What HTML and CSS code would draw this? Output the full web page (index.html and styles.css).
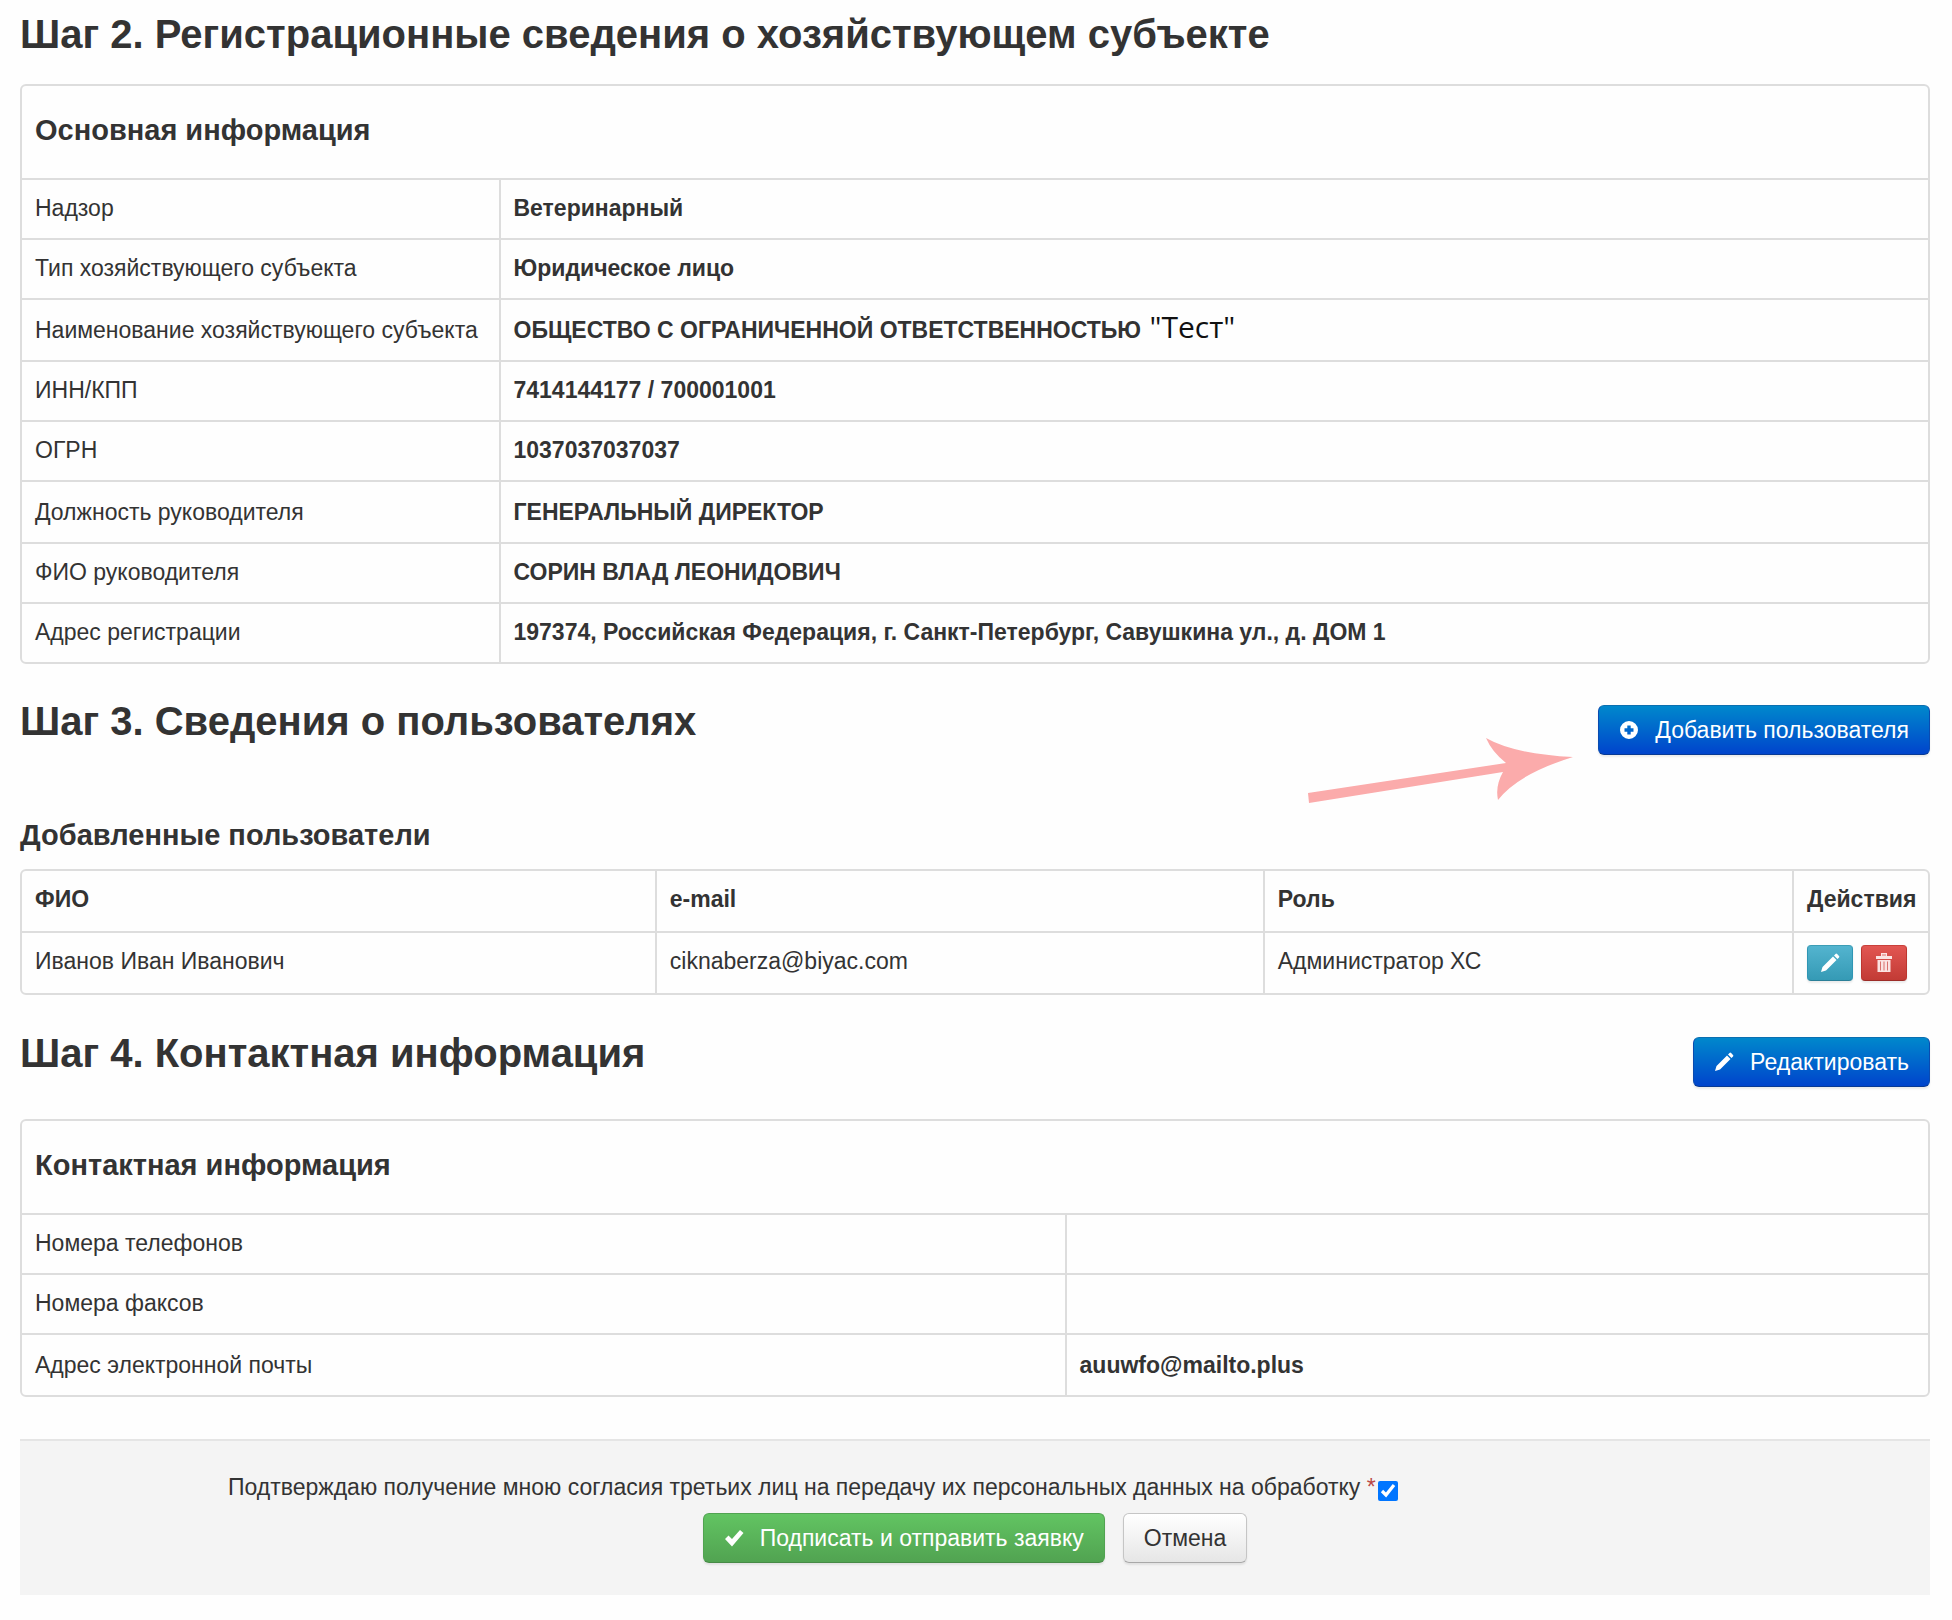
FILE: index.html
```html
<!DOCTYPE html>
<html lang="ru">
<head>
  <meta charset="UTF-8">
  <meta name="viewport" content="width=device-width, initial-scale=1">
  <title>Регистрация хозяйствующего субъекта</title>
  <link rel="stylesheet" href="styles.css">
</head>
<body>
  <div class="page">
    <div class="step-header">
      <h2>Шаг 2. Регистрационные сведения о хозяйствующем субъекте</h2>
    </div>

    <table class="table table-info">
      <thead>
        <tr><th colspan="2" class="caption"><h4>Основная информация</h4></th></tr>
      </thead>
      <tbody>
        <tr><td>Надзор</td><td><b>Ветеринарный</b></td></tr>
        <tr><td>Тип хозяйствующего субъекта</td><td><b>Юридическое лицо</b></td></tr>
        <tr class="tall"><td>Наименование хозяйствующего субъекта</td><td><b>ОБЩЕСТВО С ОГРАНИЧЕННОЙ ОТВЕТСТВЕННОСТЬЮ</b> <span class="org-name">"Тест"</span></td></tr>
        <tr><td>ИНН/КПП</td><td><b>7414144177 / 700001001</b></td></tr>
        <tr><td>ОГРН</td><td><b>1037037037037</b></td></tr>
        <tr class="tall"><td>Должность руководителя</td><td><b>ГЕНЕРАЛЬНЫЙ ДИРЕКТОР</b></td></tr>
        <tr><td>ФИО руководителя</td><td><b>СОРИН ВЛАД ЛЕОНИДОВИЧ</b></td></tr>
        <tr><td>Адрес регистрации</td><td><b>197374, Российская Федерация, г. Санкт-Петербург, Савушкина ул., д. ДОМ 1</b></td></tr>
      </tbody>
    </table>

    <div class="step-header step-users">
      <h2>Шаг 3. Сведения о пользователях</h2>
      <div class="add-user">
        <button type="button" class="btn btn-primary">
          <svg class="icon" viewBox="0 0 20 20"><path fill="#fff" fill-rule="evenodd" d="M10 1a9 9 0 1 0 0 18a9 9 0 0 0 0-18zM8.300 5.500h3.400v2.800h2.800v3.400h-2.800v2.800H8.300v-2.800H5.500V8.300h2.800z"/></svg>
          Добавить пользователя
        </button>
        <svg class="arrow" viewBox="0 0 268 66"><path fill="#fbabab" d="M0 55L198 25Q184 14 178 0Q206 16 265 19Q210 36 190 62Q187 48 195 34L1 65z"/></svg>
      </div>
    </div>

    <h4 class="users-title">Добавленные пользователи</h4>
    <table class="table table-users">
      <thead>
        <tr><th>ФИО</th><th>e-mail</th><th>Роль</th><th>Действия</th></tr>
      </thead>
      <tbody>
        <tr>
          <td>Иванов Иван Иванович</td>
          <td>ciknaberza@biyac.com</td>
          <td>Администратор ХС</td>
          <td>
            <div class="actions">
              <button type="button" class="btn btn-mini btn-info" aria-label="Редактировать">
                <svg class="icon" viewBox="0 0 20 20"><path fill="#fff" d="M1 19l1.500-5L13 3.500l3.500 3.500L6 17.500zM14 2.500L15.500 1q.8-.8 1.600 0l1.900 1.900q.8.800 0 1.600L17.500 6z"/></svg>
              </button>
              <button type="button" class="btn btn-mini btn-danger" aria-label="Удалить">
                <svg class="icon" viewBox="0 0 20 20"><path fill="#fbe3e2" d="M2 3h5V0h6v3h5v3H2zM3.500 7h13v12h-13z"/><path stroke="#d9716d" d="M8 2h4M6.500 8.500v9M10 8.500v9M13.500 8.500v9"/></svg>
              </button>
            </div>
          </td>
        </tr>
      </tbody>
    </table>

    <div class="step-header step-contacts">
      <h2>Шаг 4. Контактная информация</h2>
      <button type="button" class="btn btn-primary">
        <svg class="icon" viewBox="0 0 20 20"><path fill="#fff" d="M1 19l1.500-5L13 3.500l3.500 3.500L6 17.500zM14 2.500L15.500 1q.8-.8 1.600 0l1.900 1.900q.8.800 0 1.600L17.500 6z"/></svg>
        Редактировать
      </button>
    </div>

    <table class="table table-contacts">
      <thead>
        <tr><th colspan="2" class="caption"><h4>Контактная информация</h4></th></tr>
      </thead>
      <tbody>
        <tr><td>Номера телефонов</td><td></td></tr>
        <tr><td>Номера факсов</td><td></td></tr>
        <tr class="tall"><td>Адрес электронной почты</td><td><b>auuwfo@mailto.plus</b></td></tr>
      </tbody>
    </table>

    <form class="form-actions">
      <div class="agree">
        <label for="agree">Подтверждаю получение мною согласия третьих лиц на передачу их персональных данных на обработку <span class="required">*</span></label>
        <input type="checkbox" id="agree" checked>
      </div>
      <div class="buttons">
        <button type="button" class="btn btn-success">
          <svg class="icon" viewBox="0 0 20 20"><path fill="#fff" d="M1 11l3.500-3.500L8 11l8-9l3.500 3L8 18.500z"/></svg>
          Подписать и отправить заявку
        </button>
        <button type="button" class="btn">Отмена</button>
      </div>
    </form>
  </div>
</body>
</html>
```
FILE: styles.css
```css
* {
  box-sizing: border-box;
}

body {
  margin: 0;
  background: #fefefe;
  color: #333;
  font-family: "Liberation Sans", Arial, sans-serif;
  font-size: 23px;
  line-height: 32px;
}

h2, h4 {
  margin: 0;
  font-weight: bold;
}

h2 {
  font-size: 40px;
  line-height: 64px;
}

h4 {
  font-size: 29px;
  line-height: 32px;
}

.page {
  padding: 2px 22px 26px 20px;
}

.step-header {
  display: flex;
  justify-content: space-between;
  align-items: flex-start;
}

.table {
  width: 100%;
  margin-top: 18px;
  border: 2px solid #ddd;
  border-radius: 6px;
  border-collapse: separate;
  border-spacing: 0;
}

.table th,
.table td {
  height: 60px;
  padding: 12px 13px 14px;
  border-top: 2px solid #ddd;
  border-left: 2px solid #ddd;
  text-align: left;
  vertical-align: top;
}

.table th:first-child,
.table td:first-child {
  border-left: 0;
}

.table thead th {
  border-top: 0;
}

.table .caption {
  height: 92px;
  padding-top: 28px;
}

.table .tall td {
  height: 62px;
  padding-top: 14px;
}

.table-info td:first-child {
  width: 25%;
  white-space: nowrap;
}

.table-contacts td:first-child {
  width: 54.7%;
}

.org-name {
  margin-left: 2px;
  color: #111;
  font-family: "Open Sans", "Noto Sans", sans-serif;
  font-size: 30px;
  line-height: 24px;
}

.step-users {
  margin-top: 25px;
}

.step-users .btn,
.step-contacts .btn {
  margin-top: 16px;
}

.add-user {
  position: relative;
}

/* pointer to the "add" button */
.arrow {
  position: absolute;
  top: 49px;
  right: calc(100% + 22px);
  width: 268px;
  height: 66px;
}

.users-title {
  margin-top: 64px;
}

.table-users {
  table-layout: fixed;
}

.table-users th:nth-child(1) {
  width: 33.2%;
}

.table-users th:nth-child(2) {
  width: 31.9%;
}

.table-users th:nth-child(4) {
  width: 136px;
}

.table-users td {
  padding-bottom: 12px;
}

.actions {
  display: flex;
  gap: 8px;
}

.step-contacts {
  margin-top: 26px;
}

.table-contacts {
  margin-top: 32px;
}

.btn {
  display: inline-flex;
  align-items: center;
  gap: 16px;
  height: 50px;
  padding: 0 20px;
  border: 1px solid #c5c5c5;
  border-bottom-color: #a8a8a8;
  border-radius: 6px;
  background: linear-gradient(#fff, #e6e6e6);
  color: #333;
  font: inherit;
  box-shadow: 0 2px 2px rgba(0, 0, 0, .08);
}

.btn .icon {
  width: 20px;
  height: 20px;
}

.btn-primary {
  border-color: #0b6fb0 #0a4bb0 #083a94;
  background: linear-gradient(#0088cc, #0044cc);
  color: #fff;
}

.btn-success {
  border-color: #51a351 #51a351 #468a46;
  background: linear-gradient(#62c462, #51a351);
  color: #fff;
}

.btn-mini {
  justify-content: center;
  width: 46px;
  height: 36px;
  padding: 0;
  border-radius: 4px;
}

.btn-info {
  border-color: #3d9db5 #2f96b4 #2b7f98;
  background: linear-gradient(#53b4cf, #359ab5);
}

.btn-danger {
  border-color: #c9403b #bd362f #9c2c27;
  background: linear-gradient(#e25652, #c23b35);
}

.form-actions {
  margin-top: 42px;
  padding: 30px 26px 32px;
  border-top: 2px solid #e5e5e5;
  background: #f4f4f4;
}

.agree {
  display: flex;
  align-items: center;
  gap: 2px;
  padding-left: 182px;
}

.agree input {
  width: 20px;
  height: 20px;
  margin: 8px 0 0;
}

.required {
  color: #b94a48;
}

.buttons {
  display: flex;
  justify-content: center;
  gap: 18px;
  margin-top: 10px;
}
```
